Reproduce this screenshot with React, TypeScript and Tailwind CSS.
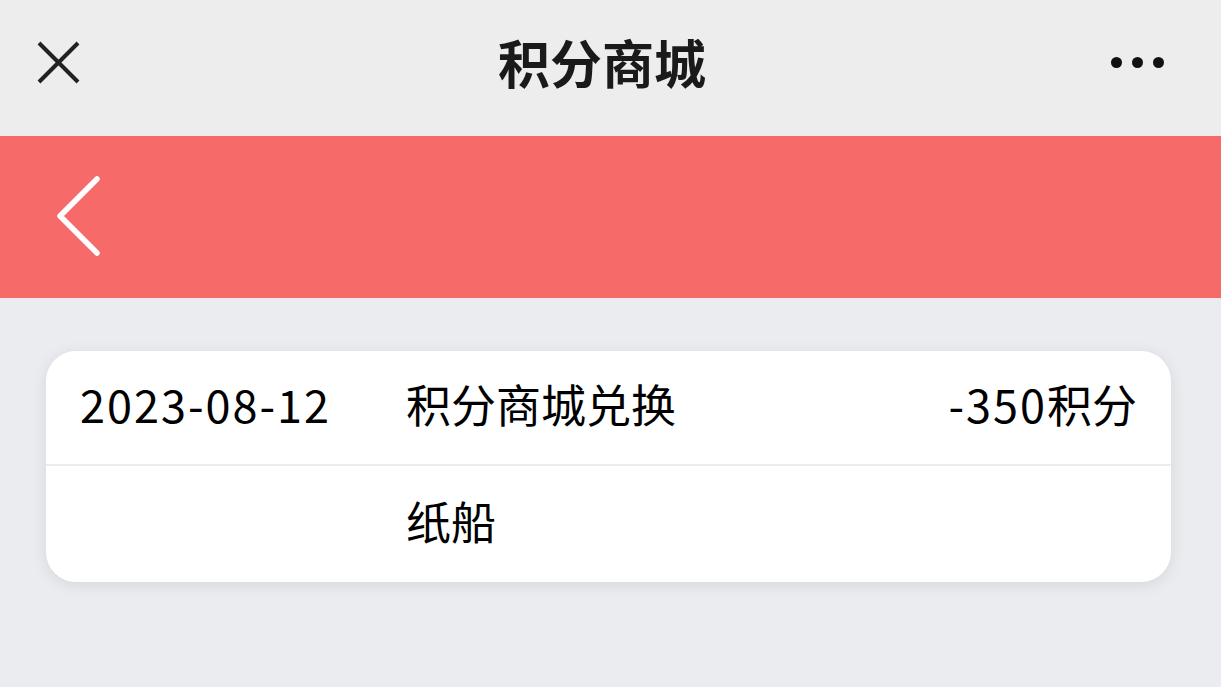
export default function App() {
  return (
    <main
      className="min-h-screen w-full bg-[#ebecf0] text-black"
      style={{ fontFamily: '"Noto Sans CJK SC", "Noto Sans", sans-serif' }}
    >
      <header className="relative h-[136px] bg-[#ededed] flex items-center justify-between px-[37px] pb-[12px]">
        <svg width="43" height="43" viewBox="0 0 43 43" className="shrink-0">
          <path d="M2 2 L41 41 M41 2 L2 41" stroke="#222" strokeWidth="4" fill="none" />
        </svg>
        <h1 className="flex-1 text-center text-[52px] font-bold text-[#1a1a1a] leading-none pl-[16px]">积分商城</h1>
        <div className="flex items-center gap-[10px] w-[56px] justify-end mr-[20px]">
          <span className="w-[11px] h-[11px] rounded-full bg-[#111]" />
          <span className="w-[11px] h-[11px] rounded-full bg-[#111]" />
          <span className="w-[11px] h-[11px] rounded-full bg-[#111]" />
        </div>
      </header>
      <div className="h-[162px] bg-[#f76a6a] flex items-center pl-[55px]">
        <svg width="50" height="84" viewBox="0 0 50 84">
          <path d="M42 4 L5 41 L42 78" stroke="#fff" strokeWidth="5.5" strokeLinecap="round" strokeLinejoin="round" fill="none" />
        </svg>
      </div>
      <div className="px-[46px] pt-[53px] pr-[50px]">
        <div className="bg-white rounded-[30px] shadow-[0_3px_16px_rgba(0,0,0,0.09)] overflow-hidden">
          <div className="h-[115px] flex items-center px-[34px] pb-[8px] border-b-2 border-[#ececec] text-[45px] leading-none">
            <span className="w-[326px] tracking-[2px]">2023-08-12</span>
            <span className="flex-1">积分商城兑换</span>
            <span><span className="tracking-[2px]">-350</span>积分</span>
          </div>
          <div className="h-[116px] flex items-center px-[34px] pb-[8px] text-[45px] leading-none">
            <span className="w-[326px]" />
            <span className="flex-1">纸船</span>
          </div>
        </div>
      </div>
    </main>
  );
}
